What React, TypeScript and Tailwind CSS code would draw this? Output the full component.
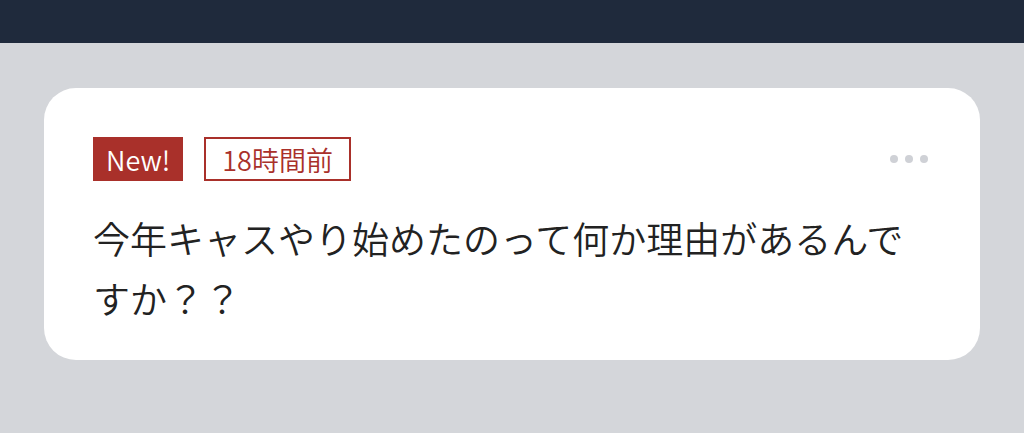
export default function App() {
  return (
    <div className="min-h-[433px] bg-[#d4d6da] font-['Noto_Sans_CJK_JP',sans-serif]">
      {/* Top bar */}
      <div className="h-[43px] bg-[#1f2a3c]" />

      {/* Card */}
      <div className="px-[44px] pt-[45px] pb-[73px]">
        <div className="rounded-[32px] bg-white px-[49px] pt-[49px] pb-[32px]">
          <div className="flex items-center">
            <span className="flex h-[44px] items-center bg-[#a9302a] px-[13px] text-[27px] font-[350] leading-none text-white">
              New!
            </span>
            <span className="ml-[21px] flex h-[44px] items-center border-2 border-[#a9302a] px-[16px] text-[27px] font-[350] leading-none text-[#a9302a]">
              18時間前
            </span>
            <div className="ml-auto mr-[3px] flex gap-[7px]">
              <span className="h-[8px] w-[8px] rounded-full bg-[#cfd1d6]" />
              <span className="h-[8px] w-[8px] rounded-full bg-[#cfd1d6]" />
              <span className="h-[8px] w-[8px] rounded-full bg-[#cfd1d6]" />
            </div>
          </div>
          <p className="mt-[27px] text-[37px] font-[350] leading-[60px] text-[#222222]">
            今年キャスやり始めたのって何か理由があるんですか？？
          </p>
        </div>
      </div>
    </div>
  );
}
